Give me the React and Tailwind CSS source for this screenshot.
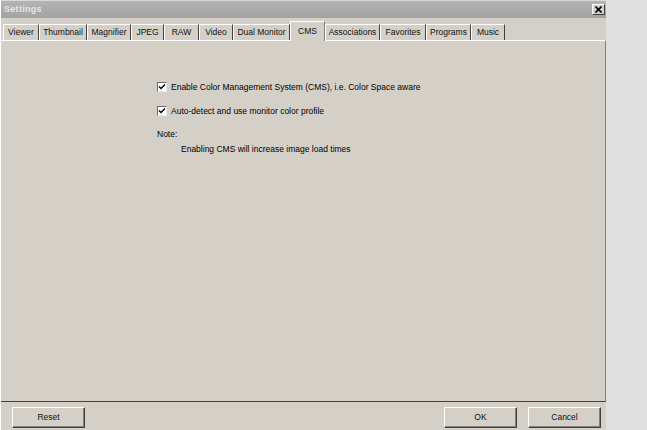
const tabs = [
  { label: 'Viewer', w: 'w-[36px]' },
  { label: 'Thumbnail', w: 'w-[48px]' },
  { label: 'Magnifier', w: 'w-[44px]' },
  { label: 'JPEG', w: 'w-[33px]' },
  { label: 'RAW', w: 'w-[35px]' },
  { label: 'Video', w: 'w-[34px]' },
  { label: 'Dual Monitor', w: 'w-[57px]' },
  { label: 'CMS', w: 'w-[35px]', active: true },
  { label: 'Associations', w: 'w-[55px]' },
  { label: 'Favorites', w: 'w-[46px]' },
  { label: 'Programs', w: 'w-[45px]' },
  { label: 'Music', w: 'w-[34px]' },
]

function Tab({ label, w, active }) {
  if (active) {
    return (
      <div
        className={`${w} h-[20px] -mb-px relative z-10 bg-[#d4d0c8] border-t border-l border-white border-r border-r-[#808080] flex items-start justify-center pt-[3px] text-[#111]`}
      >
        {label}
      </div>
    )
  }
  return (
    <div
      className={`${w} h-[16px] border-t border-l border-white border-r border-r-[#404040] flex items-center justify-center whitespace-nowrap text-[#111]`}
    >
      {label}
    </div>
  )
}

function CheckBox({ checked }) {
  return (
    <span className="w-[10px] h-[10px] bg-white border border-t-[#6a6a6a] border-l-[#6a6a6a] border-b-[#e8e8e8] border-r-[#e8e8e8] flex items-center justify-center shrink-0">
      {checked && (
        <svg width="8" height="8" viewBox="0 0 8 8">
          <path d="M1 3.5 L3 5.5 L7 1.5" stroke="#000" strokeWidth="1.5" fill="none" />
        </svg>
      )}
    </span>
  )
}

function Button({ children }) {
  return (
    <button className="w-[73px] h-[21px] bg-[#d4d0c8] border border-t-white border-l-white border-r-[#404040] border-b-[#404040] shadow-[inset_-1px_-1px_0_#808080] text-[#111]">
      {children}
    </button>
  )
}

export default function App() {
  return (
    <div
      className="w-[647px] h-[430px] flex bg-[#e0e0e0] text-[8.5px] overflow-hidden"
      style={{ fontFamily: '"Liberation Sans", Arial, sans-serif' }}
    >
      <div className="w-[606px] h-full flex flex-col bg-[#d4d0c8] border-l border-white">
        {/* title bar */}
        <div className="h-[18px] flex items-center justify-between pl-[3px] pr-[1px] bg-gradient-to-b from-[#b4b4b4] to-[#a2a2a2] border-t border-[#d8d8d8]">
          <span className="font-bold text-[9px] text-[#e6e6e6] tracking-[0.3px]">Settings</span>
          <span className="w-[13px] h-[11px] bg-[#d4d0c8] border border-t-white border-l-white border-r-[#404040] border-b-[#404040] flex items-center justify-center">
            <svg width="7" height="7" viewBox="0 0 7 7">
              <path d="M0.5 0.5 L6.5 6.5 M6.5 0.5 L0.5 6.5" stroke="#000" strokeWidth="1.6" />
            </svg>
          </span>
        </div>

        {/* tab strip */}
        <div className="h-[22px] flex items-end pl-[2px]">
          {tabs.map((t) => (
            <Tab key={t.label} {...t} />
          ))}
        </div>

        {/* CMS page */}
        <div className="flex-1 border-t border-white border-b border-b-[#404040] border-r border-r-[#808080] pl-[156px] pt-[40px]">
          <label className="flex items-center gap-[4px] h-[12px]">
            <CheckBox checked />
            <span>Enable Color Management System (CMS), i.e. Color Space aware</span>
          </label>
          <label className="flex items-center gap-[4px] h-[12px] mt-[12px]">
            <CheckBox checked />
            <span>Auto-detect and use monitor color profile</span>
          </label>
          <p className="mt-[12px] leading-[11px]">Note:</p>
          <p className="mt-[4px] pl-[24px] leading-[11px]">Enabling CMS will increase image load times</p>
        </div>

        {/* dialog buttons */}
        <div className="h-[28px] flex items-start justify-between pt-[5px] pl-[11px] pr-[5px]">
          <Button>Reset</Button>
          <div className="flex gap-[11px]">
            <Button>OK</Button>
            <Button>Cancel</Button>
          </div>
        </div>
      </div>
    </div>
  )
}
